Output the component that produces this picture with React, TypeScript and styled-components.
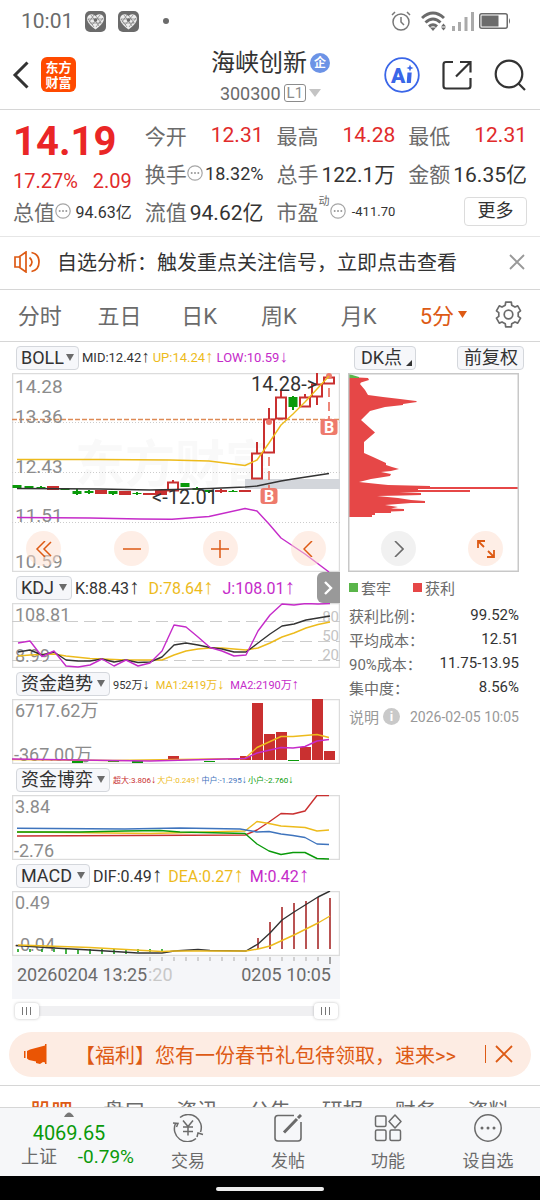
import React from "react";
import styled, { createGlobalStyle } from "styled-components";

const c = {
  ink: "#333333",
  sub: "#6b6b6b",
  mute: "#8c8c8c",
  line: "#d6d6d6",
  up: "#c93030",
  down: "#0a9a0a",
  orange: "#dd5a14",
  gold: "#edbb1c",
  violet: "#c52bc9",
  blue: "#3f74bd",
};

const Global = createGlobalStyle`
  * { box-sizing: border-box; }
  body { margin: 0; background: #fff; }
  body, button, select, input { font-family: Roboto, "Noto Sans CJK SC", sans-serif; }
  button { border: 0; padding: 0; background: none; color: inherit; cursor: pointer; }
  dl, dd, dt, h1, p { margin: 0; font-weight: 400; }
  svg { display: block; }
`;

const Screen = styled.div`
  display: flex;
  flex-direction: column;
  height: 100vh;
  color: ${c.ink};
`;
const Main = styled.main`
  flex: 1;
  min-height: 0;
  overflow: hidden;
`;

/* status bar */
const StatusBar = styled.div`
  display: flex;
  align-items: center;
  height: 40px;
  padding: 2px 29px 0 21px;
  color: ${c.sub};
  font-size: 21px;
`;
const StatusGroup = styled.div<{ $gap: number; $end?: boolean }>`
  display: flex;
  align-items: center;
  gap: ${(p) => p.$gap}px;
  margin-left: ${(p) => (p.$end ? "auto" : "0")};
`;
const Dot = styled.i`
  width: 6px;
  height: 6px;
  margin-left: 12px;
  border-radius: 50%;
  background: ${c.sub};
`;

/* header */
const Header = styled.header`
  display: grid;
  grid-template-columns: 1fr auto 1fr;
  align-items: center;
  min-height: 70px;
  padding: 0 14px 0 12px;
  border-bottom: 1px solid ${c.line};
`;
const HeaderSide = styled.div<{ $gap: number; $end?: boolean }>`
  display: flex;
  align-items: center;
  gap: ${(p) => p.$gap}px;
  justify-content: ${(p) => (p.$end ? "flex-end" : "flex-start")};
`;
const Logo = styled.a`
  display: flex;
  flex-direction: column;
  align-items: center;
  justify-content: center;
  width: 35px;
  height: 35px;
  border-radius: 6px;
  background: #ff4a00;
  color: #fff;
  font-size: 13px;
  font-weight: 700;
  line-height: 15px;
  text-decoration: none;
`;
const TitleBlock = styled.div`
  display: flex;
  flex-direction: column;
  align-items: center;
  padding: 7px 0 0 3px;
`;
const TitleLine = styled.div`
  display: flex;
  align-items: center;
  gap: 3px;
  height: 30px;
`;
const Title = styled.h1`
  font-size: 24px;
  line-height: 30px;
`;
const FirmBadge = styled.span`
  display: grid;
  place-items: center;
  width: 20px;
  height: 20px;
  border-radius: 50%;
  background: #6c93e6;
  color: #fff;
  font-size: 12px;
  font-weight: 700;
  line-height: 14px;
`;
const Code = styled.span`
  color: ${c.sub};
  font-size: 18px;
`;
const Level = styled.span`
  padding: 0 2px;
  border: 1px solid ${c.mute};
  border-radius: 3px;
  color: ${c.mute};
  font-size: 15px;
  line-height: 16px;
`;

/* quote */
const Quote = styled.section`
  display: grid;
  grid-template-columns: repeat(4, 1fr);
  grid-auto-rows: 38px;
  column-gap: 13px;
  padding: 6px 13px;
  border-bottom: 1px solid #e6e6e6;
`;
const PriceBlock = styled.div`
  grid-row: span 2;
  color: #e12b2b;
`;
const Price = styled.div`
  color: #ea2626;
  font-size: 40px;
  font-weight: 700;
  line-height: 52px;
`;
const Change = styled.div`
  display: flex;
  justify-content: space-between;
  font-size: 20px;
  line-height: 26px;
`;
const Stat = styled.dl`
  display: flex;
  align-items: center;
  justify-content: space-between;
  white-space: nowrap;
`;
const StatName = styled.dt`
  display: flex;
  align-items: center;
  color: ${c.sub};
  font-size: 21px;
`;
const Sup = styled.sup`
  align-self: flex-start;
  font-size: 11px;
  line-height: 12px;
`;
const StatValue = styled.dd<{ $size: number; $red?: boolean }>`
  color: ${(p) => (p.$red ? "#e12b2b" : c.ink)};
  font-size: ${(p) => p.$size}px;
`;
const MoreButton = styled.button`
  align-self: center;
  justify-self: end;
  width: 63px;
  height: 29px;
  border: 1px solid #dcdcdc;
  border-radius: 4px;
  font-size: 18px;
  line-height: 24px;
`;

const Notice = styled.section`
  display: flex;
  align-items: center;
  height: 53px;
  padding: 0 15px 3px 14px;
  border-bottom: 1px solid ${c.line};
  font-size: 20px;
`;
const NoticeText = styled.p`
  flex: 1;
  padding-left: 16px;
  white-space: nowrap;
`;

const PeriodTabs = styled.nav`
  display: grid;
  grid-template-columns: repeat(5, 80fr) 90fr 40fr;
  height: 52px;
  padding: 0 12px 3px 0;
  border-bottom: 1px solid ${c.line};
`;
const PeriodTab = styled.button<{ $on?: boolean }>`
  display: flex;
  align-items: center;
  justify-content: center;
  gap: 4px;
  color: ${(p) => (p.$on ? c.orange : c.sub)};
  font-size: 22px;
`;

/* charts */
const Charts = styled.section`
  display: grid;
  grid-template-columns: 328fr 176fr;
  column-gap: 8px;
  padding: 0 16px 0 12px;
`;
const Column = styled.div`
  min-width: 0;
`;
const LegendRow = styled.div`
  display: flex;
  align-items: center;
  height: 31px;
  padding-left: 4px;
  white-space: nowrap;
`;
const Picker = styled.label`
  display: inline-grid;
  align-items: center;
  margin-right: 3px;

  & > * { grid-area: 1 / 1; }
  & > svg { justify-self: end; margin-right: 5px; pointer-events: none; }
`;
const PickerSelect = styled.select<{ $gap: number }>`
  appearance: none;
  height: 24px;
  padding: 0 ${(p) => p.$gap + 13}px 0 4px;
  border: 1px solid #d4d7dc;
  border-radius: 4px;
  background: #f6f7fa;
  color: ${c.ink};
  font-size: 18px;
  line-height: 20px;
`;
const Series = styled.span<{ $color: string; $size: number; $gap: number }>`
  margin-right: ${(p) => p.$gap}px;
  color: ${(p) => p.$color};
  font-size: ${(p) => p.$size}px;
`;
const Arrow = styled.span`
  font-family: "Liberation Sans", sans-serif;
  font-size: 130%;
  line-height: 1;
`;
const ExpandTab = styled.button`
  display: grid;
  place-items: center;
  align-self: stretch;
  width: 23px;
  margin-left: auto;
  border-radius: 6px 0 0 6px;
  background: #999;
`;
const PlotBox = styled.div`
  position: relative;
`;
const Plot = styled.svg`
  width: 100%;
  height: auto;
  overflow: hidden;
  font-family: Roboto, "Noto Sans CJK SC", sans-serif;
`;
const PlotTools = styled.div<{ $left: number; $right: number }>`
  position: absolute;
  right: 0;
  bottom: 6px;
  left: 0;
  display: flex;
  justify-content: space-between;
  padding: 0 ${(p) => p.$right}px 0 ${(p) => p.$left}px;
`;
const RoundTool = styled.button<{ $grey?: boolean }>`
  display: grid;
  place-items: center;
  width: 35px;
  height: 35px;
  border-radius: 50%;
  background: ${(p) => (p.$grey ? "rgba(238,238,238,.8)" : "rgba(253,222,206,.5)")};
`;
const RangeBox = styled.div`
  position: relative;
  height: 24px;

  &::before {
    position: absolute;
    top: 7px;
    right: 3px;
    left: 3px;
    height: 10px;
    background: #f0f0f2;
    content: "";
  }
`;
const RangeInput = styled.input`
  position: absolute;
  inset: 0;
  width: 100%;
  height: 24px;
  margin: 0;
  appearance: none;
  background: none;
  pointer-events: none;

  &::-webkit-slider-thumb {
    width: 24px;
    height: 16px;
    border-radius: 4px;
    appearance: none;
    pointer-events: auto;
    box-shadow: 0 0 3px rgba(0, 0, 0, 0.25);
    background:
      linear-gradient(#777, #777) 7px 4px / 1px 8px no-repeat,
      linear-gradient(#777, #777) 11px 4px / 1px 8px no-repeat,
      linear-gradient(#777, #777) 15px 4px / 1px 8px no-repeat,
      #fff;
  }
`;

/* cost distribution */
const ChipButtons = styled.div`
  display: flex;
  align-items: center;
  justify-content: space-between;
  height: 31px;
  padding-left: 6px;
`;
const ChipButton = styled.button<{ $right: number }>`
  display: flex;
  align-items: center;
  gap: 4px;
  height: 24px;
  padding: 0 ${(p) => p.$right}px 0 6px;
  border: 1px solid #d4d7dc;
  border-radius: 4px;
  background: #f6f7fa;
  font-size: 18px;
  line-height: 20px;
  white-space: nowrap;
`;
const Side = styled.div`
  margin-right: 5px;
`;
const Keys = styled.div`
  display: flex;
  gap: 22px;
  height: 31px;
  padding-left: 1px;
  color: ${c.sub};
  font-size: 15px;
`;
const Key = styled.span<{ $color: string }>`
  display: flex;
  align-items: center;
  gap: 3px;

  &::before {
    width: 9px;
    height: 9px;
    background: ${(p) => p.$color};
    content: "";
  }
`;
const CostRow = styled.dl`
  display: flex;
  align-items: center;
  justify-content: space-between;
  height: 24px;
  padding-left: 1px;
  color: ${c.sub};
  font-size: 15px;
  white-space: nowrap;

  dd { color: ${c.ink}; }
`;
const CostNote = styled.div`
  display: flex;
  align-items: center;
  height: 35px;
  padding-left: 1px;
  color: #999;
  font-size: 15px;
  white-space: nowrap;

  time { margin-left: auto; font-size: 14px; }
`;
const Info = styled.span`
  display: grid;
  place-items: center;
  width: 17px;
  height: 17px;
  margin-left: 4px;
  border-radius: 50%;
  background: #c9c9c9;
  color: #fff;
  font-size: 13px;
  font-weight: 700;
`;

/* banner and lower tabs */
const Banner = styled.aside`
  display: flex;
  align-items: center;
  height: 45px;
  margin: 9px 9px 8px;
  padding: 0 18px 1px 15px;
  border-radius: 23px;
  background: #fdece3;
  color: ${c.orange};
  font-size: 20px;
`;
const BannerText = styled.a`
  flex: 1;
  padding-left: 27px;
  color: inherit;
  text-decoration: none;
  white-space: nowrap;
`;
const Rule = styled.i`
  width: 1px;
  height: 18px;
  margin-right: 9px;
  background: ${c.orange};
`;
const SectionTabs = styled.nav`
  display: grid;
  grid-template-columns: repeat(7, 1fr);
  padding: 10px 15px;
  border-top: 1px solid ${c.line};
`;
const SectionTab = styled.button<{ $on?: boolean }>`
  color: ${(p) => (p.$on ? c.orange : c.sub)};
  font-size: 21px;
  font-weight: ${(p) => (p.$on ? 500 : 400)};
  line-height: 30px;
`;

/* bottom bar */
const BottomBar = styled.nav`
  display: grid;
  grid-template-columns: 138fr repeat(4, 100fr);
  height: 69px;
  padding-right: 2px;
  border-top: 1px solid ${c.line};
  background: #f6f7f9;
`;
const BottomItem = styled.button`
  display: flex;
  flex-direction: column;
  align-items: center;
  gap: 6px;
  padding-top: 6px;
  color: ${c.sub};
  font-size: 17px;
  line-height: 26px;
`;
const IndexButton = styled.button`
  display: flex;
  flex-direction: column;
  align-items: center;
  padding-top: 4px;
  color: ${c.down};
  font-size: 20px;
  line-height: 24px;

  svg { margin-bottom: 4px; }
`;
const IndexLine = styled.span`
  display: flex;
  justify-content: space-between;
  align-items: center;
  align-self: stretch;
  padding: 0 4px 0 21px;
  font-size: 19px;

  b { color: ${c.sub}; font-size: 18px; font-weight: 400; }
`;
const GestureBar = styled.div`
  display: grid;
  place-items: center;
  height: 24px;
  padding-top: 2px;
  background: #000;

  &::after {
    width: 20%;
    height: 4px;
    border-radius: 2px;
    background: #ececec;
    content: "";
  }
`;

/* icons */
type StrokeProps = { w: number; h?: number; d: string; color?: string; sw?: number };
const Stroke = ({ w, h = w, d, color = "currentColor", sw = 2 }: StrokeProps) => (
  <svg width={w} height={h} viewBox={`0 0 ${w} ${h}`} fill="none" stroke={color} strokeWidth={sw} aria-hidden>
    <path d={d} />
  </svg>
);
const Triangle = ({ w = 8, h = 7, color = c.sub }) => (
  <svg width={w} height={h} viewBox="0 0 8 7" preserveAspectRatio="none" aria-hidden>
    <path d="M0 0h8L4 7z" fill={color} />
  </svg>
);
const CornerMark = () => (
  <svg width="6" height="16" viewBox="0 0 6 16" aria-hidden><path d="M6 10v6H0z" fill={c.ink} /></svg>
);
const HeartIcon = () => (
  <svg width="21" height="21" viewBox="0 0 21 21" aria-hidden>
    <rect width="21" height="21" rx="5" fill={c.sub} />
    <path d="M10.500 18.500Q4 14 2.300 9.500Q1.500 5.500 4.500 3.800Q8 2.500 10.500 5Q13 2.500 16.500 3.800Q19.500 5.500 18.700 9.500Q17 14 10.500 18.500z" fill="#ededed" />
    <path d="M3 8l6 8M6 4l8 11M11 5l5 7M18 7l-7 9M15 4L7 14M9 4L4 11M3 8h15M4.500 12h12" stroke={c.sub} strokeWidth=".6" />
    <circle cx="10.500" cy="9" r="1.800" fill={c.sub} />
  </svg>
);
const AlarmIcon = () => (
  <svg width="25" height="20" viewBox="0 0 25 20" fill="none" stroke="#777" strokeWidth="1.500" aria-hidden>
    <circle cx="10" cy="11" r="8" />
    <path d="M10 6v5l3 3M1 4l3-3M19 4l-3-3" />
  </svg>
);
const WifiIcon = () => (
  <svg width="26" height="20" viewBox="0 0 26 20" fill="none" stroke={c.sub} strokeWidth="3" aria-hidden>
    <path d="M1 7Q12 -3 23 7M4.500 11.500Q12 4.500 19.500 11.500M8 15.500Q12 12 16 15.500" />
    <path d="M9 16.500h6L12 20zM20 15.500l2.500-3 2.500 3zM20 16.500l2.500 3 2.500-3z" fill={c.sub} stroke="none" />
  </svg>
);
const SignalIcon = () => (
  <svg width="22" height="19" viewBox="0 0 22 19" fill="#aaa" aria-hidden>
    <rect y="14" width="3" height="5" /><rect x="6" y="10" width="3" height="9" />
    <rect x="12.500" y="5" width="3" height="14" /><rect x="19" width="3" height="19" />
  </svg>
);
const BatteryIcon = () => (
  <svg width="32" height="16" viewBox="0 0 32 16" aria-hidden>
    <rect x=".75" y=".75" width="27.500" height="14.500" rx="2" fill="none" stroke={c.sub} strokeWidth="1.500" />
    <rect x="2.500" y="2.500" width="17" height="11" fill={c.sub} />
    <path d="M30 5q2 3 0 6z" fill={c.sub} />
  </svg>
);
const AiIcon = () => (
  <svg width="36" height="36" viewBox="0 0 36 36" aria-hidden>
    <circle cx="18" cy="18" r="16.800" fill="none" stroke="#3a66e8" strokeWidth="1.800" />
    <text x="7" y="26" fontFamily="Roboto, sans-serif" fontWeight="900" fontSize="21" fill="#3a66e8">A</text>
    <path d="M23.500 15.500h4.200l-.8 10.500h-4.200z" fill="#3a66e8" />
    <path d="M26 7.500l1 2.500 2.500 1-2.500 1-1 2.500-1-2.500-2.500-1 2.500-1z" fill="#3a66e8" />
  </svg>
);
const SearchIcon = () => (
  <svg width="32" height="32" viewBox="0 0 32 32" fill="none" stroke={c.ink} strokeWidth="2.200" aria-hidden>
    <circle cx="15" cy="15" r="13.300" />
    <path d="M24 24l7 7" />
  </svg>
);
const DotsIcon = () => (
  <svg width="16" height="16" viewBox="0 0 16 16" aria-hidden>
    <circle cx="8" cy="8" r="7.200" fill="none" stroke="#a6a6a6" strokeWidth="1.200" />
    <circle cx="4.700" cy="8" r="1" fill="#999" /><circle cx="8" cy="8" r="1" fill="#999" /><circle cx="11.300" cy="8" r="1" fill="#999" />
  </svg>
);
const gearPoints = Array.from({ length: 6 }, (_, k) =>
  [[-13, 12.6], [13, 12.6], [19, 9.9], [41, 9.9]].map(([off, r]) => {
    const a = ((k * 60 - 90 + off) * Math.PI) / 180;
    return `${(13.5 + r * Math.cos(a)).toFixed(2)},${(13.5 + r * Math.sin(a)).toFixed(2)}`;
  }).join(" ")
).join(" ");
const GearIcon = () => (
  <svg width="27" height="27" viewBox="0 0 27 27" fill="none" stroke={c.sub} strokeWidth="1.700" strokeLinejoin="round" aria-hidden>
    <polygon points={gearPoints} />
    <circle cx="13.500" cy="13.500" r="4.300" />
  </svg>
);
const SpeakerIcon = () => (
  <svg width="27" height="22" viewBox="0 0 27 22" fill="none" stroke={c.orange} strokeWidth="1.700" aria-hidden>
    <path d="M1 6h4l7-5v20l-7-5H1zM6 6v10M15.500 6.500q5 4.500 0 9M17.500 1.500q7.500 1.500 7.500 9.500t-7.500 9.500" />
  </svg>
);
const HornIcon = () => (
  <svg width="24" height="21" viewBox="0 0 24 21" fill="#ea5504" aria-hidden>
    <path d="M0 7h1.500v7H0zM3 7L6 5.500 21 1.500V0h1.500v20H21v-1.500l-2-.5-3 2-4-1v-1.500L5 16l-2-1.500z" />
  </svg>
);
const TradeIcon = () => (
  <svg width="32" height="28" viewBox="0 0 32 28" fill="none" stroke={c.sub} strokeWidth="1.500" aria-hidden>
    <path d="M8 3.500A13 13 0 0 1 28.500 18M24 24.500A13 13 0 0 1 3.500 9.500M1 9l5 .5-1.500 3.500M31 20.500l-5-1.500-1 4" />
    <path d="M11 6.500l5 6 5-6M16 12.500v9M11 13h10M11 17.500h10" />
  </svg>
);
const PostIcon = () => (
  <svg width="28" height="28" viewBox="0 0 28 28" fill="none" stroke={c.sub} strokeWidth="1.600" aria-hidden>
    <path d="M20 1.500H4Q1 1.500 1 4.500V24q0 3 3 3h20q3 0 3-3V8" />
    <path d="M10 18.500L23 5M24 4l3-3" strokeWidth="3" />
  </svg>
);
const GridIcon = () => (
  <svg width="28" height="28" viewBox="0 0 28 28" fill="none" stroke={c.sub} strokeWidth="1.500" aria-hidden>
    <rect x="1.500" y="2" width="10.500" height="10.500" rx="1.500" /><rect x="1.500" y="16" width="10.500" height="10.500" rx="1.500" />
    <rect x="16" y="16" width="10.500" height="10.500" rx="1.500" /><path d="M21 1l6 6.500-6 6.500-6-6.500z" strokeLinejoin="round" />
  </svg>
);
const MoreIcon = () => (
  <svg width="28" height="28" viewBox="0 0 28 28" aria-hidden>
    <circle cx="14" cy="14" r="13.200" fill="none" stroke={c.sub} strokeWidth="1.500" />
    <circle cx="8" cy="14" r="1.500" fill={c.sub} /><circle cx="14" cy="14" r="1.500" fill={c.sub} /><circle cx="20" cy="14" r="1.500" fill={c.sub} />
  </svg>
);

/* chart pieces */
const slot = (i: number) => 17 + i * 12;
const Line = ({ pts, color }: { pts: string; color: string }) => (
  <polyline points={pts} fill="none" stroke={color} strokeWidth="1.400" strokeLinejoin="round" />
);
const Label = ({ x, y, children, color = c.mute, size = 18, end }: any) => (
  <text x={x} y={y} fill={color} fontSize={size} textAnchor={end ? "end" : "start"}>{children}</text>
);
const Frame = ({ y, h }: { y: number; h: number }) => (
  <rect x="12.500" y={y + 0.5} width="327" height={h - 1} fill="none" stroke="#dcdcdc" strokeWidth="1.500" />
);

// [slot, kind, top, bottom, wick top, wick bottom]; r = solid red, g = solid green, h = hollow red
const candles: [number, "r" | "g" | "h", number, number, number, number][] = [
  [0, "g", 485, 488, 485, 488], [1, "g", 486, 488, 486, 489], [2, "g", 487, 488, 486, 489],
  [3, "r", 486, 490, 486, 490], [4, "g", 488, 490, 488, 490], [5, "g", 491, 494, 489, 495],
  [6, "g", 491, 493, 490, 494], [7, "r", 490, 494, 490, 494], [8, "g", 491, 494, 491, 495],
  [9, "r", 491, 495, 491, 495], [10, "g", 493, 494, 492, 495], [11, "r", 493, 495, 493, 495],
  [12, "r", 490, 495, 490, 495], [13, "h", 482, 491, 480, 491], [14, "g", 483, 487, 483, 487],
  [15, "g", 488, 490, 487, 490], [16, "g", 490, 492, 490, 493], [17, "r", 490, 492, 489, 493],
  [18, "g", 491, 492, 490, 492], [19, "r", 490, 492, 490, 492], [20, "h", 453, 479, 442, 479],
  [21, "h", 419, 453, 408, 453], [22, "h", 397, 419, 390, 419], [23, "g", 397, 407, 396, 410],
  [24, "h", 397, 407, 394, 407], [25, "h", 384, 397, 373, 405], [26, "h", 377, 384, 374, 384],
];

const BuyMark = ({ x, y }: { x: number; y: number }) => (
  <g>
    <rect x={x - 8.5} y={y} width="17" height="16" rx="3" fill="#ee7a6c" />
    <text x={x} y={y + 13.5} textAnchor="middle" fontSize="16" fontWeight="700" fill="#fff">B</text>
  </g>
);

const PricePlot = () => (
  <Plot viewBox="12 373 328 199" role="img" aria-label="BOLL">
    <text x="75" y="482" fontSize="50" fontWeight="700" fill="#f9f9f9">东方财富</text>
    <Frame y={373} h={199} />
    <rect x="245" y="479" width="95" height="10" fill="#d3d6db" />
    <path d="M12 422.500H340M12 472.500H340M12 522.500H340" stroke="#ccc" strokeDasharray="1 2" />
    <path d="M12 419.500H340" stroke="#dd8a56" strokeDasharray="5 2" strokeWidth="1.500" />
    <Label x={15} y={393} size={19}>14.28</Label>
    <Label x={15} y={423} size={19}>13.36</Label>
    <Label x={15} y={473} size={19}>12.43</Label>
    <Label x={15} y={522} size={19}>11.51</Label>
    <Label x={15} y={568} size={19}>10.59</Label>
    {candles.map(([i, kind, top, bottom, wt, wb]) => {
      const color = kind === "g" ? c.down : c.up;
      const wide = kind === "r" ? 12 : 9;
      return (
        <g key={i} stroke={color}>
          <path d={`M${slot(i)} ${wt}V${wb}`} strokeWidth="2" />
          {kind === "h"
            ? <rect x={slot(i) - 5} y={top + 0.5} width="10" height={bottom - top - 1} fill="#fff" strokeWidth="2" />
            : <rect x={slot(i) - wide / 2} y={top} width={wide} height={bottom - top} fill={color} stroke="none" />}
        </g>
      );
    })}
    <circle cx="269" cy="422" r="3" fill="#ee7a6c" />
    <circle cx="329" cy="376" r="3" fill="#ee7a6c" />
    <path d="M269 457V488M329 388V419" stroke="#e8604f" strokeWidth="1.500" strokeDasharray="9 5" />
    <Line color={c.ink} pts="17,488.500 100,489 150,490 175,489.500 210,488.500 245,487 257,486 269,483.500 281,481 293,479 329,473.500" />
    <Line color={c.gold} pts="17,459.500 100,459.500 170,460 209,461 233,464 245,465.500 257,460 269,443 281,425 293,414 305,402 317,389 329,376" />
    <Line color={c.violet} pts="17,517.500 90,518 140,519 172,519.300 209,516.500 245,508.500 257,511 269,524 281,538 305,554 329,572" />
    <Label x={251} y={391} size={20} color={c.ink}>{"14.28->"}</Label>
    <Label x={152} y={504} size={20} color={c.ink}>{"<-12.01"}</Label>
    <BuyMark x={269} y={488} />
    <BuyMark x={329} y={419} />
  </Plot>
);

const KdjPlot = () => (
  <Plot viewBox="12 603 328 65" role="img" aria-label="KDJ">
    <Frame y={603} h={65} />
    <path d="M12 621.500H340M12 641.500H340M12 660.500H340" stroke="#ccc" strokeDasharray="12 6" />
    <Label x={15} y={621}>108.81</Label>
    <Label x={15} y={662}>8.99</Label>
    <Label x={339} y={622} size={15} color="#c4c4c4" end>80</Label>
    <Label x={339} y={641} size={15} color="#c4c4c4" end>50</Label>
    <Label x={339} y={660} size={15} color="#c4c4c4" end>20</Label>
    <Line color={c.gold} pts="18,656 30,655 54,654 66,656 90,658.500 126,660 162,660 174,655 186,651 198,649 210,648 222,648 246,650 258,648 270,643 282,637 294,633 306,628 318,624.500 330,622" />
    <Line color={c.ink} pts="18,652 30,650 42,655 54,652 66,660 78,661 90,661 102,659 114,662 126,660 138,662.500 150,662 162,657 174,645 186,643 198,645 210,647.500 222,649 234,652 246,652 258,643 270,634 282,626 294,624 306,620 318,618 330,616" />
    <Line color={c.violet} pts="18,643 30,641 42,656.500 54,651 66,666 78,667 90,665 102,659 114,666 126,660 138,666 150,663 162,651 174,625 186,627 198,637 210,647.500 222,651 234,656 246,655 258,631 270,615 282,604 294,605 306,603.500 318,604 330,603.500" />
  </Plot>
);

const flows: [number, number, number, boolean?][] = [
  [5, 761, 763, true], [8, 761, 762, true], [10, 761, 763, true], [13, 756, 760], [16, 761, 762, true],
  [18, 758, 760], [19, 756, 760], [20, 703, 760], [21, 734, 760], [22, 732, 760], [23, 760, 761, true],
  [24, 747, 760], [25, 699, 760], [26, 751, 760],
];
const FlowPlot = () => (
  <Plot viewBox="12 699 328 65" role="img" aria-label="资金趋势">
    <Frame y={699} h={65} />
    <Label x={15} y={717}>6717.62万</Label>
    <Label x={14} y={761}>-367.00万</Label>
    {flows.map(([i, top, bottom, out]) => (
      <rect key={i} x={slot(i) - 5} y={top} width="11" height={bottom - top} fill={out ? c.down : c.up} />
    ))}
    <Line color={c.gold} pts="12,759.500 113,760.500 245,758.500 257,747.500 281,736.500 293,736.500 317,734.500 329,737.500" />
    <Line color={c.violet} pts="12,759 113,760.500 150,761 245,758.500 257,753 281,747.500 293,748 305,746.500 317,741 329,739.500" />
  </Plot>
);

const GamePlot = () => (
  <Plot viewBox="12 795 328 65" role="img" aria-label="资金博弈">
    <Frame y={795} h={65} />
    <Label x={15} y={813}>3.84</Label>
    <Label x={14} y={857}>-2.76</Label>
    <Line color={c.up} pts="17,836 245,835 257,830 269,822 281,813.500 293,814 305,811 317,795.500 329,795.500" />
    <Line color={c.gold} pts="17,832 70,832.500 150,833.500 245,831 257,821.500 269,823.500 281,826 305,827.500 317,831 329,830" />
    <Line color={c.blue} pts="17,828.300 125,829 180,828 240,829 257,832 269,831.500 281,834 293,835.500 305,837.500 317,844 329,844.500" />
    <Line color={c.down} pts="17,832 80,832 125,831 160,830.500 180,832 245,833.500 257,844 269,851 281,854.500 293,852.500 305,852.500 317,858.500 329,859" />
  </Plot>
);

const macdTops = [938, 922, 907, 903, 901, 897, 898];
const MacdPlot = () => (
  <Plot viewBox="12 891 328 108" role="img" aria-label="MACD">
    <rect x="12" y="957" width="328" height="42" fill="#f5f6f9" />
    <Frame y={891} h={65} />
    <Label x={15} y={909}>0.49</Label>
    <Label x={15} y={951}>-0.04</Label>
    {Array.from({ length: 13 }, (_, i) => (
      <path key={i} d={`M${18 + i * 12} 949v${i > 3 && i < 10 ? 5 : 3}`} stroke={c.down} strokeWidth="1.500" />
    ))}
    {macdTops.map((top, i) => (
      <path key={i} d={`M${258 + i * 12} ${top}V949`} stroke="#b95454" strokeWidth="2" />
    ))}
    <Line color={c.ink} pts="16,945.500 54,948 90,950 138,953 162,953 174,951 198,949.500 210,950.500 246,951 258,944 270,933 282,920 294,912 306,904.500 318,897 330,891" />
    <Line color={c.gold} pts="18,945 90,947.500 162,951.500 174,951 246,951 258,949 270,946 282,940.500 294,935 306,929 318,923 330,916" />
    {Array.from({ length: 16 }, (_, i) => (
      <path key={i} d={`M${150 + i * 12} 957v${i === 15 ? 7 : 4}`} stroke={i === 15 ? "#888" : "#c4c4c4"} strokeWidth="1.500" />
    ))}
    <Label x={148} y={981} color="#c8c8c8">:20</Label>
    <Label x={17} y={981} color={c.sub}>20260204 13:25</Label>
    <Label x={331} y={981} color={c.sub} end>0205 10:05</Label>
  </Plot>
);

const CostPlot = () => (
  <Plot viewBox="348 373 171 199" role="img" aria-label="筹码分布">
    <path d="M349 377L368 378 369 380 361 382.500 360 384 365 390 368 395 383 397 400 399 416 401 417 402 403 404 403 405 385 407 370 411 361 420 375 432.500 364 442 364 453 373 457 386 463 386 465 392 467 399 469 391 471 381 472 391 474 390 476 371 479 359 482 378 484 388 485 430 486 430 487 519 487 519 489 418 489 418 490 470 490 470 492 399 492 421 493 421 495 403 495.500 377 496 398 498 411 500 425 501 425 503 411 503 385 505 398 507 391 508.500 404 509 404 511 391 511.500 391 513 375 513 375 515 372 515 372 517 349 517z" fill="#e64747" />
    <path d="M349 374L359 377V378H349z" fill="#5ab54a" />
    <rect x="348.750" y="373.750" width="169.500" height="197.500" fill="none" stroke="#c8c8c8" strokeWidth="1.500" />
  </Plot>
);

type SeriesItem = { t: string; dir: string; color: string };
type LegendProps = { name: string; items: SeriesItem[]; size: number; gap: number; arrowGap?: number; extra?: React.ReactNode };
const Legend = ({ name, items, size, gap, arrowGap = 3, extra }: LegendProps) => (
  <LegendRow>
    <Picker>
      <PickerSelect aria-label="指标" $gap={arrowGap} defaultValue={name}>
        <option>{name}</option>
      </PickerSelect>
      <Triangle />
    </Picker>
    {items.map((s) => (
      <Series key={s.t} $color={s.color} $size={size} $gap={gap}>
        {s.t}<Arrow>{s.dir}</Arrow>
      </Series>
    ))}
    {extra}
  </LegendRow>
);

const StatItem = ({ name, value, size = 21, red, dots, sup }: any) => (
  <Stat>
    <StatName>{name}{sup && <Sup>{sup}</Sup>}{dots && <DotsIcon />}</StatName>
    <StatValue $size={size} $red={red}>{value}</StatValue>
  </Stat>
);

export default function App() {
  return (
    <Screen>
      <Global />
      <Main>
        <StatusBar>
          <StatusGroup $gap={12}>
            <span>10:01</span><HeartIcon /><HeartIcon /><Dot />
          </StatusGroup>
          <StatusGroup $gap={5} $end>
            <AlarmIcon /><WifiIcon /><SignalIcon /><BatteryIcon />
          </StatusGroup>
        </StatusBar>

        <Header>
          <HeaderSide $gap={12}>
            <button aria-label="返回"><Stroke w={17} h={28} sw={3} color={c.ink} d="M15.500 1.500L3 14l12.500 12.500" /></button>
            <Logo href="#home"><span>东方</span><span>财富</span></Logo>
          </HeaderSide>
          <TitleBlock>
            <TitleLine><Title>海峡创新</Title><FirmBadge>企</FirmBadge></TitleLine>
            <TitleLine><Code>300300</Code><Level>L1</Level><Triangle w={12} h={8} color="#c4c4c4" /></TitleLine>
          </TitleBlock>
          <HeaderSide $gap={22} $end>
            <button aria-label="AI"><AiIcon /></button>
            <button aria-label="分享"><Stroke w={30} h={30} sw={2.2} color={c.ink} d="M11 2H4Q1.500 2 1.500 4.500V26q0 2.500 2.500 2.500h22q2.500 0 2.500-2.500V18M18 2h10.500v10.500M28.500 2L14 16.500" /></button>
            <button aria-label="搜索"><SearchIcon /></button>
          </HeaderSide>
        </Header>

        <Quote>
          <PriceBlock>
            <Price>14.19</Price>
            <Change><span>17.27%</span><span>2.09</span></Change>
          </PriceBlock>
          <StatItem name="今开" value="12.31" red />
          <StatItem name="最高" value="14.28" red />
          <StatItem name="最低" value="12.31" red />
          <StatItem name="换手" value="18.32%" size={18} dots />
          <StatItem name="总手" value="122.1万" />
          <StatItem name="金额" value="16.35亿" />
          <StatItem name="总值" value="94.63亿" size={16} dots />
          <StatItem name="流值" value="94.62亿" />
          <StatItem name="市盈" value="-411.70" size={13} dots sup="动" />
          <MoreButton>更多</MoreButton>
        </Quote>

        <Notice>
          <SpeakerIcon />
          <NoticeText>自选分析：触发重点关注信号，立即点击查看</NoticeText>
          <button aria-label="关闭"><Stroke w={16} sw={1.8} color="#999" d="M1 1l14 14M15 1L1 15" /></button>
        </Notice>

        <PeriodTabs>
          {["分时", "五日", "日K", "周K", "月K"].map((t) => <PeriodTab key={t}>{t}</PeriodTab>)}
          <PeriodTab $on>5分<Triangle w={9} h={7} color={c.orange} /></PeriodTab>
          <PeriodTab aria-label="设置"><GearIcon /></PeriodTab>
        </PeriodTabs>

        <Charts>
          <Column>
            <Legend name="BOLL" size={13} gap={3} arrowGap={1} items={[
              { t: "MID:12.42", dir: "↑", color: c.ink },
              { t: "UP:14.24", dir: "↑", color: c.gold },
              { t: "LOW:10.59", dir: "↓", color: c.violet },
            ]} />
            <PlotBox>
              <PricePlot />
              <PlotTools $left={14} $right={14}>
                <RoundTool aria-label="最左"><Stroke w={18} h={16} sw={1.5} color={c.orange} d="M10 0L2 8l8 8M16 1L9 8l7 7" /></RoundTool>
                <RoundTool aria-label="缩小"><Stroke w={18} sw={1.5} color={c.orange} d="M0 9h18" /></RoundTool>
                <RoundTool aria-label="放大"><Stroke w={18} sw={1.5} color={c.orange} d="M0 9h18M9 0v18" /></RoundTool>
                <RoundTool aria-label="向左"><Stroke w={10} h={16} sw={1.5} color={c.orange} d="M9 0L1 8l8 8" /></RoundTool>
              </PlotTools>
            </PlotBox>
            <Legend name="KDJ" size={16} gap={9} items={[
              { t: "K:88.43", dir: "↑", color: c.ink },
              { t: "D:78.64", dir: "↑", color: c.gold },
              { t: "J:108.01", dir: "↑", color: c.violet },
            ]} extra={<ExpandTab aria-label="展开"><Stroke w={9} h={14} sw={2.4} color="#fff" d="M1 1l6 6-6 6" /></ExpandTab>} />
            <KdjPlot />
            <Legend name="资金趋势" size={11} gap={6} items={[
              { t: "952万", dir: "↓", color: c.ink },
              { t: "MA1:2419万", dir: "↓", color: c.gold },
              { t: "MA2:2190万", dir: "↑", color: c.violet },
            ]} />
            <FlowPlot />
            <Legend name="资金博弈" size={8} gap={1} items={[
              { t: "超大:3.806", dir: "↓", color: c.up },
              { t: "大户:0.249", dir: "↑", color: c.gold },
              { t: "中户:-1.295", dir: "↓", color: c.blue },
              { t: "小户:-2.760", dir: "↓", color: c.down },
            ]} />
            <GamePlot />
            <Legend name="MACD" size={16} gap={6} items={[
              { t: "DIF:0.49", dir: "↑", color: c.ink },
              { t: "DEA:0.27", dir: "↑", color: c.gold },
              { t: "M:0.42", dir: "↑", color: c.violet },
            ]} />
            <MacdPlot />
            <RangeBox>
              <RangeInput type="range" aria-label="起点" min={0} max={304} defaultValue={3} />
              <RangeInput type="range" aria-label="终点" min={0} max={304} defaultValue={302} />
            </RangeBox>
          </Column>

          <Column>
            <ChipButtons>
              <ChipButton $right={3}>DK点<CornerMark /></ChipButton>
              <ChipButton $right={5}>前复权</ChipButton>
            </ChipButtons>
            <Side>
              <PlotBox>
                <CostPlot />
                <PlotTools $left={33} $right={16}>
                  <RoundTool $grey aria-label="向右"><Stroke w={10} h={16} sw={1.6} color={c.sub} d="M1 0l8 8-8 8" /></RoundTool>
                  <RoundTool aria-label="全屏"><Stroke w={18} sw={1.8} color={c.orange} d="M1 8V1h7M1 1l6 6M10 17h7v-7M17 17l-6-6" /></RoundTool>
                </PlotTools>
              </PlotBox>
              <Keys><Key $color="#5ab54a">套牢</Key><Key $color="#e64747">获利</Key></Keys>
              <CostRow><dt>获利比例：</dt><dd>99.52%</dd></CostRow>
              <CostRow><dt>平均成本：</dt><dd>12.51</dd></CostRow>
              <CostRow><dt>90%成本：</dt><dd>11.75-13.95</dd></CostRow>
              <CostRow><dt>集中度：</dt><dd>8.56%</dd></CostRow>
              <CostNote>说明<Info>i</Info><time>2026-02-05 10:05</time></CostNote>
            </Side>
          </Column>
        </Charts>

        <Banner>
          <HornIcon />
          <BannerText href="#gift">【福利】您有一份春节礼包待领取，速来&gt;&gt;</BannerText>
          <Rule />
          <button aria-label="关闭"><Stroke w={18} sw={1.8} d="M1 1l16 16M17 1L1 17" /></button>
        </Banner>

        <SectionTabs>
          {["股吧", "盘口", "资讯", "公告", "研报", "财务", "资料"].map((t, i) => (
            <SectionTab key={t} $on={i === 0}>{t}</SectionTab>
          ))}
        </SectionTabs>
      </Main>

      <BottomBar>
        <IndexButton>
          <svg width="10" height="5" viewBox="0 0 10 5" aria-hidden><path d="M0 5q5-9 10 0z" fill="#777" /></svg>
          <span>4069.65</span>
          <IndexLine><b>上证</b>-0.79%</IndexLine>
        </IndexButton>
        <BottomItem><TradeIcon />交易</BottomItem>
        <BottomItem><PostIcon />发帖</BottomItem>
        <BottomItem><GridIcon />功能</BottomItem>
        <BottomItem><MoreIcon />设自选</BottomItem>
      </BottomBar>
      <GestureBar />
    </Screen>
  );
}
